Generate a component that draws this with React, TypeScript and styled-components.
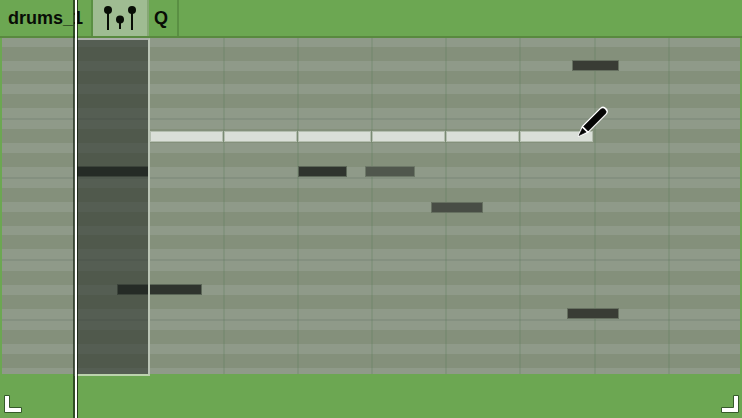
import React from "react";
import styled, { createGlobalStyle } from "styled-components";

const GlobalStyle = createGlobalStyle`
  * { box-sizing: border-box; }
  html, body, #root { height: 100%; }
  body {
    margin: 0;
    background: #6ca752;
    color: #080d06;
    font-family: "Liberation Sans", Arial, sans-serif;
  }
`;

const Editor = styled.main`
  position: relative;
  min-height: 100%;
  display: flex;
  flex-direction: column;
  overflow: hidden;
`;

const Toolbar = styled.header`
  display: flex;
  height: 38px;
  flex: none;
  border-bottom: 2px solid #59893f;
`;

const ToolButton = styled.button<{ $active?: boolean }>`
  display: flex;
  align-items: center;
  justify-content: center;
  margin: 0;
  padding: 0 9px 0 5px;
  border: 0;
  border-right: 2px solid ${(p) => (p.$active ? "#86a775" : "#5a8f43")};
  border-radius: 0;
  background: ${(p) => (p.$active ? "#9fbc92" : "transparent")};
  color: inherit;
  font: bold 18px/38px "Liberation Sans", Arial, sans-serif;
`;

const ClipName = styled(ToolButton)`
  padding: 0 8px;
`;

const IconButton = styled(ToolButton)`
  padding: 0 10px;
`;

const Roll = styled.section`
  position: relative;
  margin: 0 2px;
  overflow: hidden;
`;

type LaneKind = "light" | "dark" | "line";

const laneColors: Record<LaneKind, string> = {
  light: "#8f9a89",
  dark: "#84907b",
  line: "#849080",
};

const Lane = styled.div<{ $kind: LaneKind; $height: number }>`
  height: ${(p) => p.$height}px;
  background: ${(p) => laneColors[p.$kind]};
`;

const Beats = styled.div`
  position: absolute;
  inset: 0;
  display: flex;
  pointer-events: none;
`;

const Beat = styled.div`
  flex: 0 0 10vw;
  border-right: 2px solid rgba(83, 120, 83, 0.2);
`;

const Selection = styled.div`
  position: absolute;
  top: 38px;
  left: 10vw;
  width: calc(10vw + 2px);
  height: 338px;
  border: 2px solid #bac4b5;
  border-top-color: #acb0ab;
  border-bottom-color: #bcd3ad;
  background: rgba(28, 34, 29, 0.5) padding-box;
`;

const Note = styled.div<{
  $start: number;
  $length: number;
  $top: number;
  $color: string;
  $edge: string;
}>`
  position: absolute;
  left: calc(${(p) => p.$start} * 100vw / 742);
  top: ${(p) => p.$top}px;
  width: calc(${(p) => p.$length} * 100vw / 742);
  height: 11px;
  border: 1px solid ${(p) => p.$edge};
  background: ${(p) => p.$color} padding-box;
`;

const Playhead = styled.div`
  position: absolute;
  top: 0;
  bottom: 0;
  left: calc(10vw - 1px);
  width: 5px;
  border-left: 2px solid rgba(12, 24, 8, 0.62);
  border-right: 1px solid rgba(12, 24, 8, 0.75);
  background: #fff padding-box;
`;

const Pencil = styled.svg`
  position: absolute;
  left: calc(576 * 100vw / 742);
  top: 105px;
`;

const Footer = styled.footer`
  display: flex;
  flex: 1;
  align-items: flex-end;
  justify-content: space-between;
  padding: 0 3px 5px 4px;
`;

const Grip = styled.button`
  display: block;
  padding: 0;
  border: 0;
  background: none;
  line-height: 0;
`;

type LaneSpec = [LaneKind, number];

const octave: LaneSpec[] = [
  ["dark", 14], ["light", 10], ["dark", 14], ["light", 10],
  ["line", 2], ["light", 9], ["dark", 14], ["light", 10],
  ["dark", 14], ["light", 9], ["dark", 14], ["light", 10],
  ["line", 2], ["light", 10],
];

const lanes: LaneSpec[] = [
  ["light", 9],
  ["dark", 14], ["light", 10], ["dark", 13], ["light", 10],
  ["dark", 14], ["light", 10], ["line", 2], ["light", 9],
  ...octave,
  ...octave.slice(0, 9),
  ["light", 6],
];

const velocity = {
  full: ["#2f342e", "#5c6758"],
  high: ["#393c35", "#667060"],
  medium: ["#484d45", "#667060"],
  low: ["#50574d", "#6c7767"],
  drawn: ["#dadfd8", "#b4beaf"],
};

type NoteSpec = { start: number; length: number; top: number; level: keyof typeof velocity };

const drawnNotes: NoteSpec[] = [150, 224, 298, 372, 446, 520].map((start) => ({
  start, length: 73, top: 131, level: "drawn",
}));

const notes: NoteSpec[] = [
  ...drawnNotes,
  { start: 572, length: 47, top: 60, level: "high" },
  { start: 76, length: 73, top: 166, level: "full" },
  { start: 298, length: 49, top: 166, level: "full" },
  { start: 365, length: 50, top: 166, level: "low" },
  { start: 431, length: 52, top: 202, level: "medium" },
  { start: 117, length: 85, top: 284, level: "full" },
  { start: 567, length: 52, top: 308, level: "high" },
];

function VelocityIcon() {
  return (
    <svg width="34" height="36" viewBox="0 0 34 36" aria-hidden="true">
      <path d="M5 10V30M17 19V29M29 10V30" stroke="#080d06" strokeWidth="2" fill="none" />
      <circle cx="5" cy="10" r="4" fill="#080d06" />
      <circle cx="17" cy="19.5" r="4" fill="#080d06" />
      <circle cx="29" cy="10" r="4" fill="#080d06" />
    </svg>
  );
}

function ResizeGrip({ side }: { side: "left" | "right" }) {
  return (
    <Grip aria-label={`Resize ${side}`}>
      <svg width="18" height="18" viewBox="0 0 18 18">
        <path
          d={side === "left"
            ? "M.5 .5H5.5V12.5H17.5V17.5H.5Z"
            : "M12.5 .5H17.5V17.5H.5V12.5H12.5Z"}
          fill="#fff"
          stroke="#355b29"
        />
      </svg>
    </Grip>
  );
}

export default function App() {
  return (
    <>
      <GlobalStyle />
      <Editor>
        <Toolbar>
          <ClipName>drums_1</ClipName>
          <IconButton $active aria-label="Velocity">
            <VelocityIcon />
          </IconButton>
          <ToolButton>Q</ToolButton>
        </Toolbar>
        <Roll aria-label="Piano roll">
          {lanes.map(([kind, height], i) => (
            <Lane key={i} $kind={kind} $height={height} />
          ))}
          <Beats>
            {Array.from({ length: 10 }, (_, i) => <Beat key={i} />)}
          </Beats>
        </Roll>
        {notes.map((note) => (
          <Note
            key={`${note.start}-${note.top}`}
            $start={note.start}
            $length={note.length}
            $top={note.top}
            $color={velocity[note.level][0]}
            $edge={velocity[note.level][1]}
          />
        ))}
        <Selection />
        <Playhead />
        <Pencil width="34" height="34" viewBox="0 0 34 34" aria-hidden="true">
          <path
            d="M2.5 31L6.5 21.5L24.5 3.5A3.9 3.9 0 0 1 30 9L12 27Z"
            fill="#fff"
            stroke="#fff"
            strokeWidth="1.5"
            strokeLinejoin="round"
          />
          <path
            d="M7.6 21.4L24.8 4.2A3.3 3.3 0 0 1 29.4 8.8L12.2 26Z"
            fill="#050505"
            stroke="#050505"
            strokeWidth="0.6"
          />
          <path d="M3 30.5L6.4 23.3L10.2 27.1Z" fill="#050505" stroke="#050505" strokeWidth="0.6" />
        </Pencil>
        <Footer>
          <ResizeGrip side="left" />
          <ResizeGrip side="right" />
        </Footer>
      </Editor>
    </>
  );
}
